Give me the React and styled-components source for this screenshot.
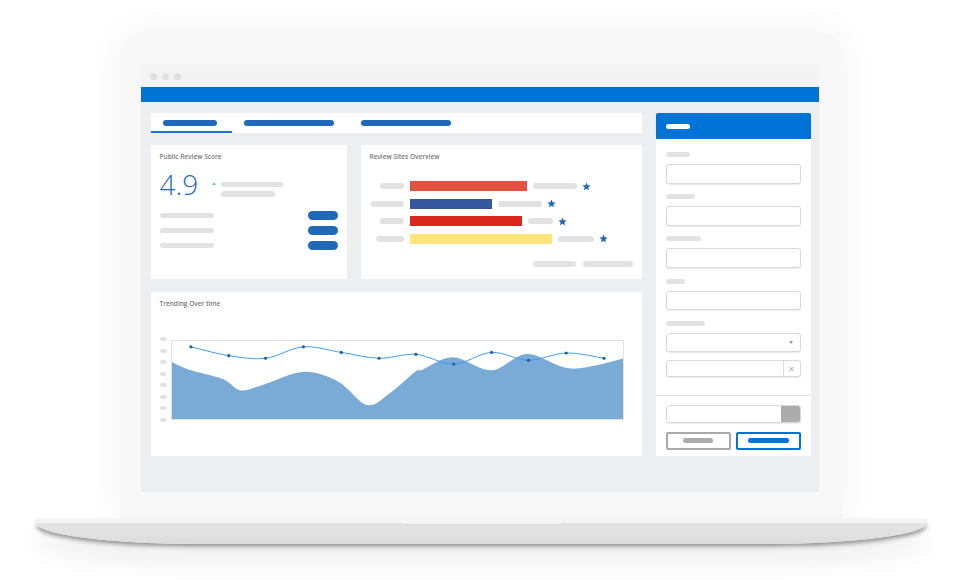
import styled, { createGlobalStyle, css } from 'styled-components'

const GlobalStyle = createGlobalStyle`
  html, body {
    margin: 0;
    padding: 0;
    background: #fff;
  }
  body {
    font-family: "Open Sans", "Liberation Sans", sans-serif;
  }
  * {
    box-sizing: border-box;
  }
`

const BLUE = '#0073d6'
const INK = '#1f69b8'
const GREY = '#e2e2e2'

// laptop frame

const Stage = styled.div`
  width: 962px;
  height: 583px;
  display: flex;
  flex-direction: column;
  align-items: center;
  padding-top: 32px;
  overflow: hidden;
`

const Lid = styled.div`
  width: 723px;
  padding: 33px 24px 26px 21px;
  background: #f8f8f8;
  border-radius: 24px 24px 0 0;
  box-shadow: 0 0 40px rgba(0, 0, 0, 0.05);
`

const Base = styled.div`
  width: 893px;
  height: 26px;
  display: flex;
  justify-content: center;
  background: linear-gradient(to bottom, #f7f7f7 0, #f3f3f3 5px, #e5e5e5 5px, #dcdcdc 100%);
  border-radius: 2px 2px 160px 160px / 2px 2px 22px 22px;
  box-shadow: 0 4px 5px -2px rgba(0, 0, 0, 0.45), 0 16px 26px rgba(0, 0, 0, 0.08);
`

const Notch = styled.div`
  width: 165px;
  height: 6px;
  background: #f6f6f6;
  border-radius: 0 0 5px 5px;
  box-shadow: 0 1px 1px rgba(0, 0, 0, 0.05);
`

const Screen = styled.div`
  height: 427px;
  display: flex;
  flex-direction: column;
  background: #edeef2;
`

const Chrome = styled.div`
  height: 22px;
  display: flex;
  align-items: center;
  gap: 5px;
  padding-left: 9px;
  background: #f3f3f4;
`

const Dot = styled.span`
  width: 7px;
  height: 7px;
  border-radius: 50%;
  background: #e0e0e0;
`

const TopBar = styled.div`
  height: 15px;
  background: ${BLUE};
`

const Workspace = styled.div`
  flex: 1;
  display: flex;
  align-items: flex-start;
  gap: 14px;
  padding: 11px 8px 0 10px;
`

const MainColumn = styled.div`
  width: 491px;
  display: flex;
  flex-direction: column;
`

// placeholder bars

const Pill = styled.span`
  display: block;
  flex: none;
  width: ${(p) => p.$w}px;
  height: ${(p) => p.$h || 5}px;
  border-radius: ${(p) => (p.$h || 5) / 2}px;
  background: ${(p) => p.$color || GREY};
`

// tabs

const TabBar = styled.div`
  height: 20px;
  display: flex;
  background: #fff;
`

const Tab = styled.div`
  display: flex;
  align-items: center;
  padding: 2px 15px 0 12px;
  border-bottom: 2px solid ${(p) => (p.$active ? '#1a73d0' : 'transparent')};
`

// cards

const CardRow = styled.div`
  display: flex;
  gap: 14px;
  height: 134px;
  margin-top: 12px;
`

const Card = styled.div`
  width: ${(p) => (p.$w ? `${p.$w}px` : 'auto')};
  flex: ${(p) => (p.$w ? 'none' : '1')};
  display: flex;
  flex-direction: column;
  padding: 8px 9px;
  background: #fff;
`

const TrendCard = styled(Card)`
  flex: none;
  height: 164px;
  margin-top: 13px;
`

const CardTitle = styled.div`
  font-size: 6.5px;
  line-height: 8px;
  font-weight: 600;
  color: #7a7a7a;
  white-space: nowrap;
`

const ScoreRow = styled.div`
  display: flex;
  align-items: flex-start;
  margin-top: 9px;
`

const Score = styled.div`
  font-size: 28px;
  line-height: 28px;
  font-weight: 300;
  color: #1f6dbd;
`

const TrendUp = styled.span`
  width: 0;
  height: 0;
  margin: 12px 0 0 14px;
  border-left: 2px solid transparent;
  border-right: 2px solid transparent;
  border-bottom: 3px solid #6fcf97;
`

const TrendLines = styled.div`
  display: flex;
  flex-direction: column;
  gap: 4px;
  margin: 12px 0 0 5px;
`

const StatList = styled.div`
  display: flex;
  flex-direction: column;
  gap: 6px;
  margin-top: 13px;
`

const StatRow = styled.div`
  height: 9px;
  display: flex;
  align-items: center;
  justify-content: space-between;
`

const SiteList = styled.div`
  display: flex;
  flex-direction: column;
  gap: 7.5px;
  margin-top: 20px;
`

const SiteRow = styled.div`
  height: 10px;
  display: flex;
  align-items: center;
  gap: 6px;
`

const SiteLabel = styled.div`
  width: 34px;
  display: flex;
  justify-content: flex-end;
`

const Bar = styled.span`
  height: 10px;
  width: ${(p) => p.$w}px;
  background: ${(p) => p.$color};
`

const StarIcon = styled.svg`
  width: 9px;
  height: 9px;
  margin-left: -1px;
  fill: ${INK};
`

const CardFooter = styled.div`
  display: flex;
  justify-content: flex-end;
  gap: 7px;
  margin-top: 17.5px;
`

// chart

const ChartRow = styled.div`
  display: flex;
  gap: 4px;
  margin-top: 32px;
`

const Axis = styled.div`
  height: 85px;
  margin-top: -3px;
  display: flex;
  flex-direction: column;
  justify-content: space-between;
`

const ChartBox = styled.div`
  width: 453px;
  height: 80px;
  border: 1px solid #e2e2e2;
  background: #fff;

  svg {
    display: block;
    width: 100%;
    height: 100%;
  }
`

// side form

const SidePanel = styled.div`
  width: 155px;
  height: 343px;
  display: flex;
  flex-direction: column;
  background: #fff;
`

const PanelHeader = styled.div`
  height: 26px;
  display: flex;
  align-items: center;
  padding-left: 10px;
  background: ${BLUE};
  border-radius: 2px 2px 0 0;
`

const FormBody = styled.div`
  display: flex;
  flex-direction: column;
  gap: 10.7px;
  padding: 13px 10px 18px;
  border-bottom: 1px solid #e0e0e0;
`

const Field = styled.div`
  display: flex;
  flex-direction: column;
  gap: 7px;
`

const Input = styled.div`
  height: ${(p) => p.$h || 19.5}px;
  display: flex;
  align-items: stretch;
  justify-content: flex-end;
  overflow: hidden;
  border: 1px solid #d6d9de;
  border-radius: 3px;
  background: #fff;
  box-shadow: 0 1px 1px rgba(0, 0, 0, 0.08);
  ${(p) =>
    p.$gap &&
    css`
      margin-top: 1px;
    `}
`

const Caret = styled.span`
  align-self: center;
  width: 0;
  height: 0;
  margin-right: 7px;
  border-left: 2.5px solid transparent;
  border-right: 2.5px solid transparent;
  border-top: 3.5px solid #9a9a9a;
`

const Clear = styled.span`
  width: 17px;
  display: flex;
  align-items: center;
  justify-content: center;
  border-left: 1px solid #dcdcdc;
  font-size: 11px;
  line-height: 1;
  color: #b0b0b0;
`

const Knob = styled.span`
  width: 19px;
  background: #acacac;
`

const PanelFooter = styled.div`
  display: flex;
  flex-direction: column;
  gap: 9px;
  padding: 9px 10px 6px;
`

const ButtonRow = styled.div`
  display: flex;
  gap: 5px;
`

const Button = styled.div`
  flex: 1;
  height: 18px;
  display: flex;
  align-items: center;
  justify-content: center;
  border: 2px solid ${(p) => (p.$primary ? BLUE : '#a9a9a9')};
  border-radius: 2px;
  background: #fff;
`

// data

const sites = [
  { label: 24, bar: 117, color: '#e35141', tail: 44 },
  { label: 33, bar: 82, color: '#34579f', tail: 44 },
  { label: 24, bar: 112, color: '#d9261c', tail: 25 },
  { label: 28, bar: 142, color: '#ffe57a', tail: 36 },
]

const linePts = [
  [19, 6], [57, 15], [94, 17.7], [132, 6], [170, 11.7], [208, 17.7],
  [245, 13.7], [283, 23.7], [321, 11.7], [358, 19.7], [396, 12.3], [434, 17.7],
]

const areaPts = [
  [0, 21.7], [19, 30], [51, 39], [69, 50.7], [91, 45], [132, 31.7], [167, 41.7],
  [196, 65.7], [219, 53.3], [244, 31.7], [252, 29.3], [282, 16.7], [321, 30],
  [357, 13.3], [401, 28.3], [453, 18.3],
]

function smooth(pts) {
  let d = `M${pts[0][0]},${pts[0][1]}`
  for (let i = 0; i < pts.length - 1; i++) {
    const p0 = pts[i - 1] || pts[i]
    const p1 = pts[i]
    const p2 = pts[i + 1]
    const p3 = pts[i + 2] || p2
    const c1 = [p1[0] + (p2[0] - p0[0]) / 6, p1[1] + (p2[1] - p0[1]) / 6]
    const c2 = [p2[0] - (p3[0] - p1[0]) / 6, p2[1] - (p3[1] - p1[1]) / 6]
    d += ` C${c1[0]},${c1[1]} ${c2[0]},${c2[1]} ${p2[0]},${p2[1]}`
  }
  return d
}

const Star = () => (
  <StarIcon viewBox="0 0 24 24">
    <path d="M12 1.5l3.1 7.1 7.7.7-5.8 5.1 1.7 7.6L12 18l-6.7 4 1.7-7.6-5.8-5.1 7.7-.7z" />
  </StarIcon>
)

const TrendChart = () => (
  <ChartBox>
    <svg viewBox="0 0 453 80" preserveAspectRatio="none">
      <path d={`${smooth(areaPts)} L453,80 L0,80 Z`} fill="#7aaad6" />
      <path d={smooth(linePts)} fill="none" stroke="#3d9bec" strokeWidth="1" />
      {linePts.map(([x, y]) => (
        <circle key={x} cx={x} cy={y} r="1.6" fill="#1b5ea8" />
      ))}
    </svg>
  </ChartBox>
)

export default function App() {
  return (
    <Stage>
      <GlobalStyle />
      <Lid>
        <Screen>
          <Chrome>
            <Dot />
            <Dot />
            <Dot />
          </Chrome>
          <TopBar />
          <Workspace>
            <MainColumn>
              <TabBar>
                <Tab $active>
                  <Pill $w={54} $h={6} $color={INK} />
                </Tab>
                <Tab>
                  <Pill $w={90} $h={6} $color={INK} />
                </Tab>
                <Tab>
                  <Pill $w={90} $h={6} $color={INK} />
                </Tab>
              </TabBar>

              <CardRow>
                <Card $w={196}>
                  <CardTitle>Public Review Score</CardTitle>
                  <ScoreRow>
                    <Score>4.9</Score>
                    <TrendUp />
                    <TrendLines>
                      <Pill $w={62} />
                      <Pill $w={54} $h={5.5} />
                    </TrendLines>
                  </ScoreRow>
                  <StatList>
                    {[0, 1, 2].map((i) => (
                      <StatRow key={i}>
                        <Pill $w={54} $h={5.5} />
                        <Pill $w={30} $h={9} $color={INK} />
                      </StatRow>
                    ))}
                  </StatList>
                </Card>

                <Card>
                  <CardTitle>Review Sites Overview</CardTitle>
                  <SiteList>
                    {sites.map((s, i) => (
                      <SiteRow key={i}>
                        <SiteLabel>
                          <Pill $w={s.label} $h={6} />
                        </SiteLabel>
                        <Bar $w={s.bar} $color={s.color} />
                        <Pill $w={s.tail} $h={6} />
                        <Star />
                      </SiteRow>
                    ))}
                  </SiteList>
                  <CardFooter>
                    <Pill $w={43} $h={6} />
                    <Pill $w={50} $h={6} />
                  </CardFooter>
                </Card>
              </CardRow>

              <TrendCard>
                <CardTitle>Trending Over time</CardTitle>
                <ChartRow>
                  <Axis>
                    {Array.from({ length: 8 }, (_, i) => (
                      <Pill key={i} $w={7} $h={4} />
                    ))}
                  </Axis>
                  <TrendChart />
                </ChartRow>
              </TrendCard>
            </MainColumn>

            <SidePanel>
              <PanelHeader>
                <Pill $w={24} $h={5} $color="#fff" />
              </PanelHeader>
              <FormBody>
                {[24, 29, 35, 19].map((w) => (
                  <Field key={w}>
                    <Pill $w={w} />
                    <Input />
                  </Field>
                ))}
                <Field>
                  <Pill $w={39} />
                  <Input>
                    <Caret />
                  </Input>
                  <Input $h={17} $gap>
                    <Clear>×</Clear>
                  </Input>
                </Field>
              </FormBody>
              <PanelFooter>
                <Input $h={17.5}>
                  <Knob />
                </Input>
                <ButtonRow>
                  <Button>
                    <Pill $w={30} $color="#acacac" />
                  </Button>
                  <Button $primary>
                    <Pill $w={41} $color={BLUE} />
                  </Button>
                </ButtonRow>
              </PanelFooter>
            </SidePanel>
          </Workspace>
        </Screen>
      </Lid>
      <Base>
        <Notch />
      </Base>
    </Stage>
  )
}
